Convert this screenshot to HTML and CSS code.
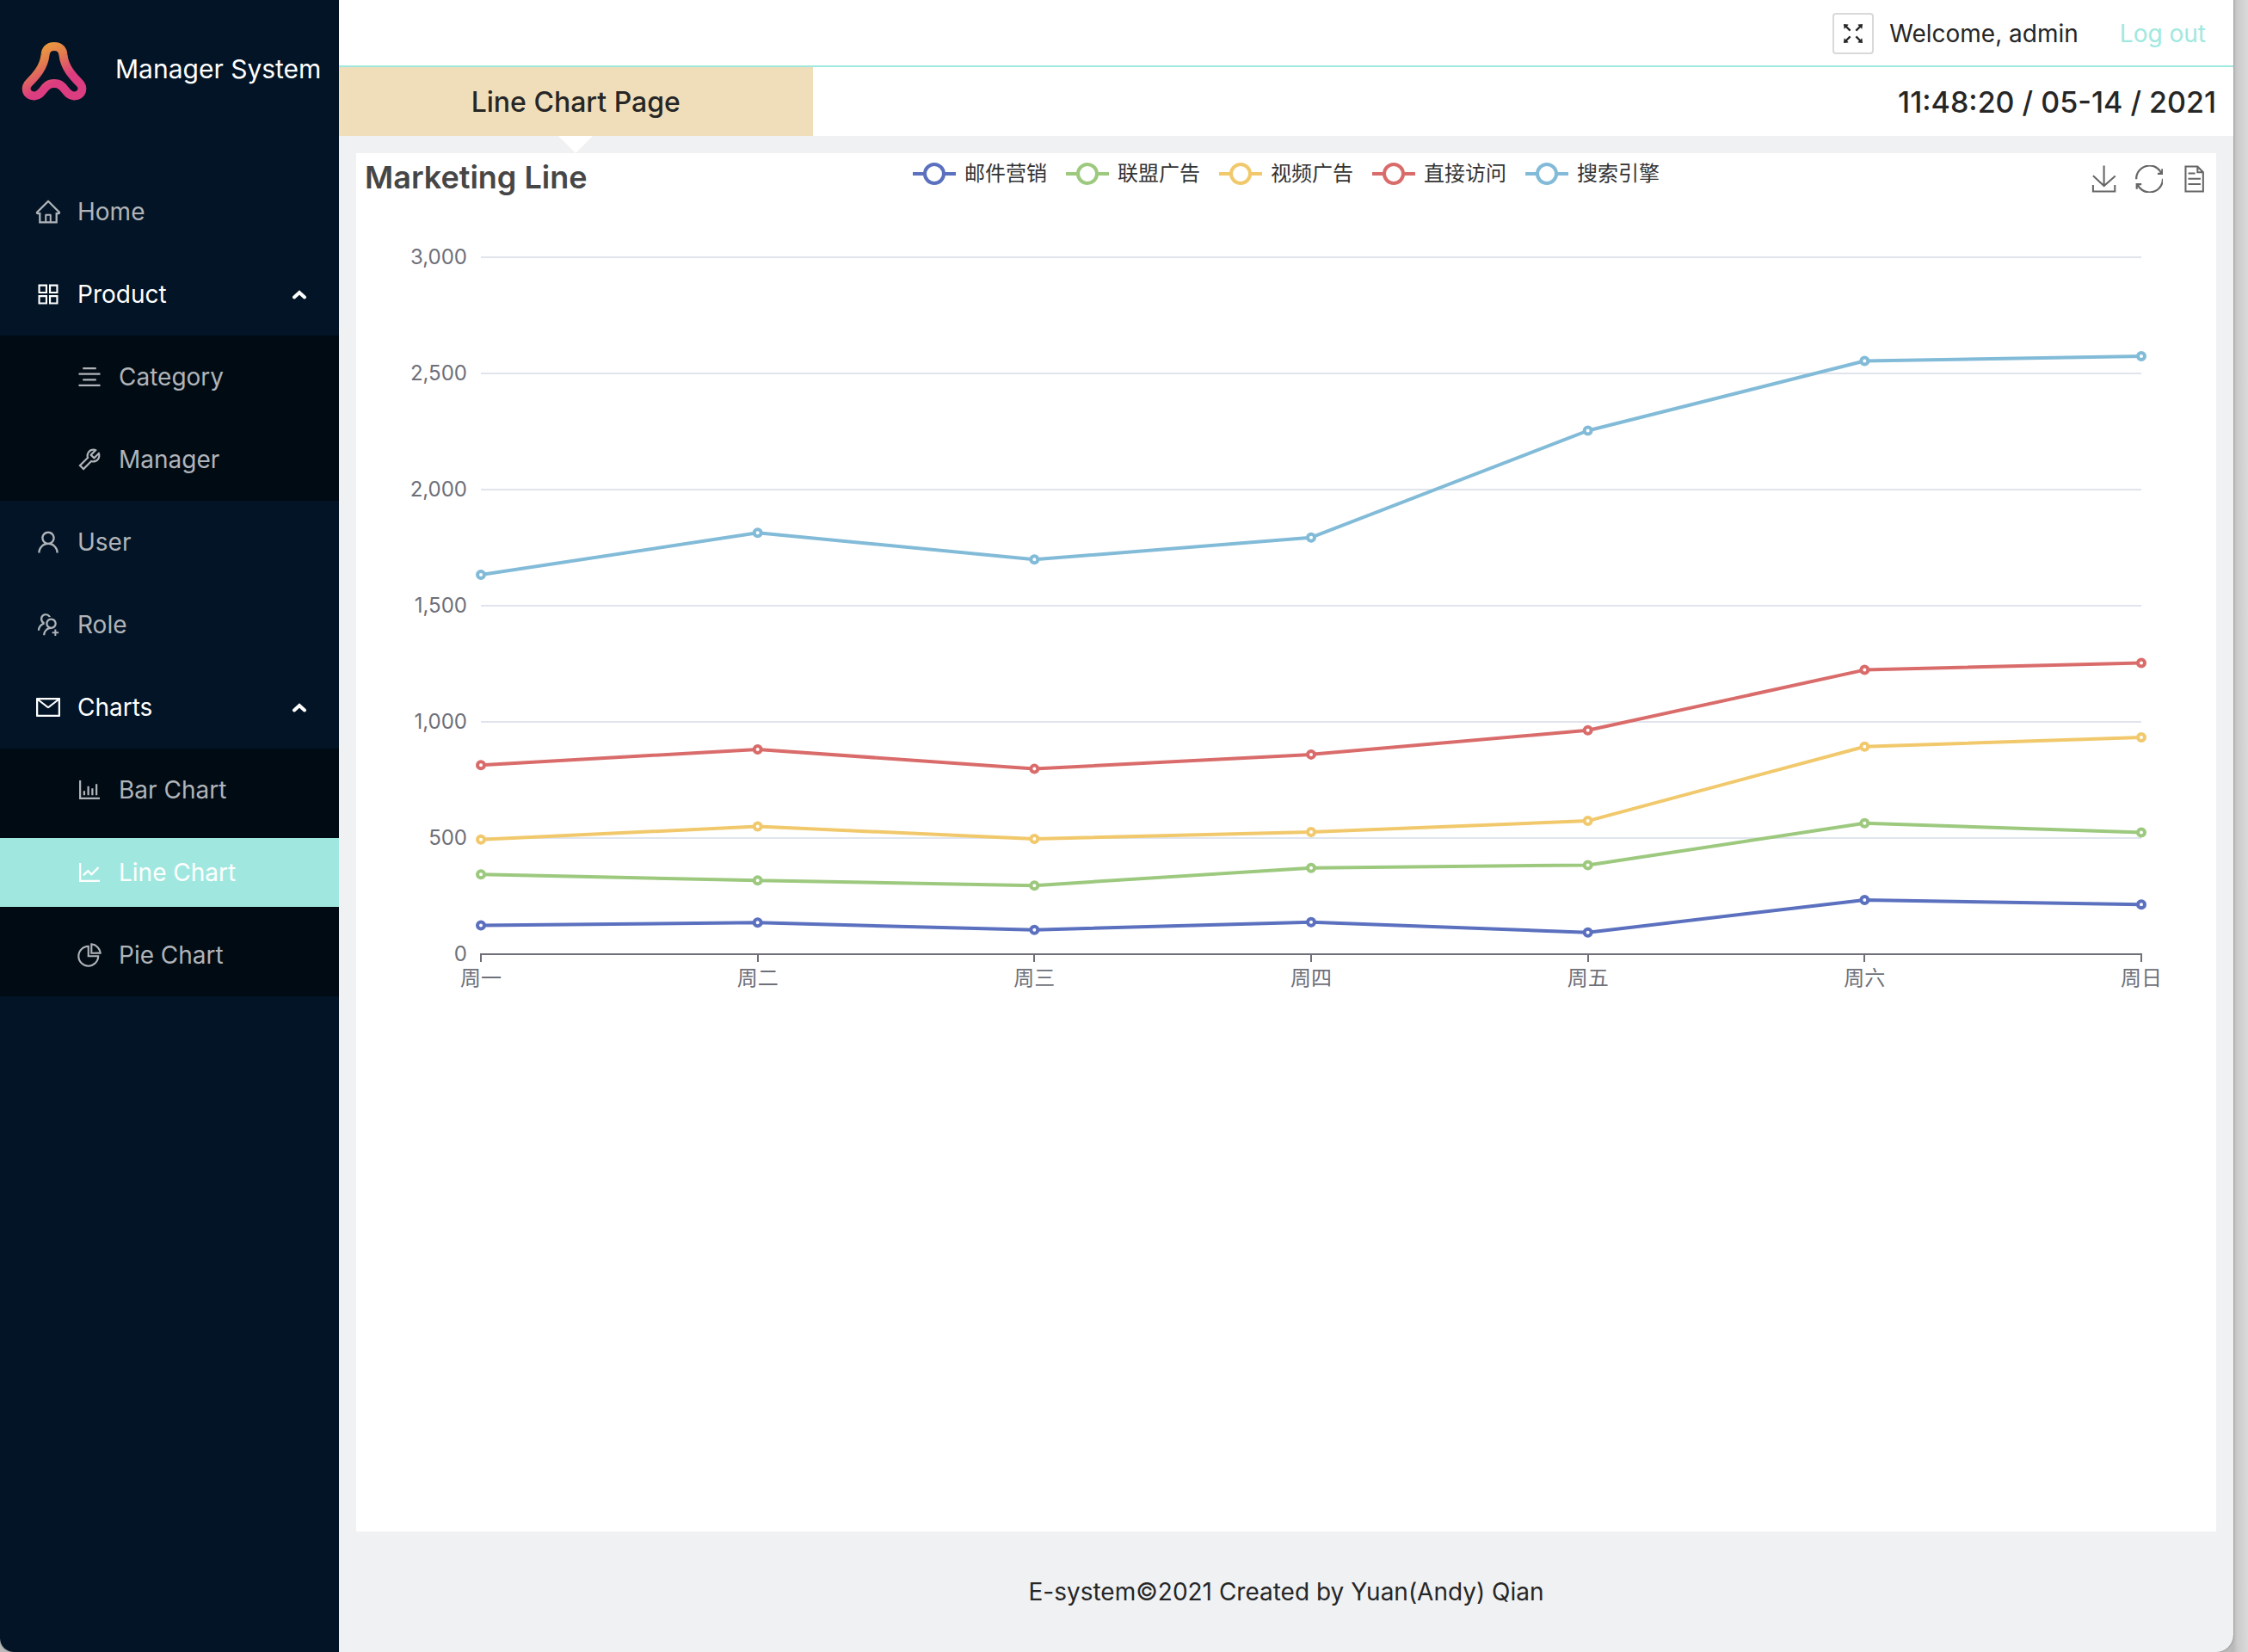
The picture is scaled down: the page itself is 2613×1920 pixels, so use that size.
FILE: index.html
```html
<!DOCTYPE html>
<html lang="en">
<head>
<meta charset="utf-8">
<title>Manager System</title>
<link rel="stylesheet" href="styles.css">
</head>
<body>
<div class="window">
  <aside class="sidebar">
    <div class="brand">
      <svg class="brand-logo" viewBox="0 0 80 80" aria-hidden="true">
        <defs>
          <linearGradient id="logo" gradientUnits="userSpaceOnUse" x1="26" y1="8" x2="56" y2="66">
            <stop offset="0" stop-color="#eda23a"/>
            <stop offset=".35" stop-color="#e37b4e"/>
            <stop offset=".75" stop-color="#dc3c80"/>
            <stop offset="1" stop-color="#dc3c80"/>
          </linearGradient>
        </defs>
        <path fill="none" stroke="url(#logo)" stroke-width="10" stroke-linejoin="round" d="M39 14C32 14 29 18 28.500 24C27 38 18 48 10 56C4 61 6 72 16 71.500C27 70.500 26 57 39 57C52 57 51 70.500 62 71.500C72 72 74 61 68 56C60 48 51 38 49.500 24C49 18 46 14 39 14Z"/>
      </svg>
      <span class="brand-name">Manager System</span>
    </div>
    <nav>
      <ul class="menu">
        <li><a class="item" href="#home">
          <svg class="icon" viewBox="0 0 1024 1024"><path d="M946.500 505L560.100 118.800l-25.900-25.900a31.500 31.500 0 0 0-44.400 0L77.500 505a63.900 63.900 0 0 0-18.800 46c.4 35.200 29.700 63.300 64.900 63.300h42.500V940h691.800V614.300h43.400c17.100 0 33.200-6.700 45.300-18.800a63.600 63.600 0 0 0 18.700-45.300c0-17-6.700-33.100-18.800-45.200zM568 868H456V664h112v204zm217.900-325.700V868H632V640c0-22.100-17.900-40-40-40H432c-22.100 0-40 17.900-40 40v228H238.100V542.300h-96l370-369.700 23.100 23.100L882 542.300h-96.100z"/></svg>
          Home</a></li>
        <li>
          <button class="item open" type="button" aria-expanded="true">
            <svg class="icon" viewBox="0 0 1024 1024"><path fill-rule="evenodd" d="M144 144h336v336H144zM212 212v200h200V212zM544 144h336v336H544zM612 212v200h200V212zM144 544h336v336H144zM212 612v200h200V612zM544 544h336v336H544zM612 612v200h200V612z"/></svg>
            Product
            <svg class="chevron" viewBox="0 0 20 12"><path d="M4 9.500L10 4L16 9.500"/></svg>
          </button>
          <ul class="submenu">
            <li><a class="item" href="#category">
              <svg class="icon" viewBox="0 0 1024 1024"><path d="M264 158h496v72H264zM112 364h800v72H112zM264 582h496v72H264zM112 794h800v72H112z"/></svg>
              Category</a></li>
            <li><a class="item" href="#manager">
              <svg class="icon" viewBox="0 0 1024 1024"><path d="M876.600 239.500c-.5-.9-1.200-1.800-2-2.500-5-5-13.100-5-18.100 0L684.200 409.300l-67.900-67.900L788.700 169c.8-.8 1.400-1.600 2-2.500 3.600-6.100 1.600-13.900-4.500-17.500-98.200-58-226.800-44.700-311.300 39.700-67 67-89.200 162-66.500 247.400l-293 293c-3 3-2.800 7.900.3 11l169.700 169.700c3.100 3.100 8.100 3.300 11 .3l292.900-292.900c85.500 22.800 180.500.7 247.600-66.400 84.400-84.500 97.700-213.100 39.700-311.300zM786 499.800c-58.100 58.100-145.300 69.300-214.600 33.600l-8.800 8.800-.1-.1-274 274.100-79.200-79.200 230.100-230.100s0 .1.100.1l52.800-52.800c-35.700-69.300-24.500-156.500 33.600-214.600a184.200 184.200 0 0 1 144-53.500L537 318.900a32.050 32.050 0 0 0 0 45.300l124.500 124.500a32.050 32.050 0 0 0 45.300 0l132.800-132.800c3.700 51.800-14.400 104.800-53.600 143.900z"/></svg>
              Manager</a></li>
          </ul>
        </li>
        <li><a class="item" href="#user">
          <svg class="icon" viewBox="0 0 1024 1024"><path d="M858.500 763.600a374 374 0 0 0-80.600-119.500 375.630 375.630 0 0 0-119.500-80.600c-.4-.2-.8-.3-1.200-.5C719.500 518 760 444.700 760 362c0-137-111-248-248-248S264 225 264 362c0 82.700 40.500 156 102.800 201.100-.4.2-.8.3-1.200.5-44.800 18.900-85 46-119.500 80.600a375.630 375.630 0 0 0-80.600 119.500A371.700 371.700 0 0 0 136 901.800a8 8 0 0 0 8 8.200h60c4.400 0 7.900-3.500 8-7.800 2-77.200 33-149.500 87.800-204.300 56.700-56.700 132-87.900 212.200-87.900s155.500 31.200 212.200 87.900C779 752.700 810 825 812 902.200c.1 4.400 3.600 7.800 8 7.800h60a8 8 0 0 0 8-8.200c-1-47.800-10.900-94.300-29.500-138.200zM512 534c-45.900 0-89.100-17.900-121.600-50.400S340 407.900 340 362c0-45.900 17.900-89.100 50.400-121.600S466.100 190 512 190s89.100 17.900 121.600 50.400S684 316.100 684 362c0 45.900-17.900 89.100-50.400 121.600S557.900 534 512 534z"/></svg>
          User</a></li>
        <li><a class="item" href="#role">
          <svg class="icon" viewBox="0 0 1024 1024"><path d="M892 772h-80v-80c0-4.400-3.600-8-8-8h-48c-4.400 0-8 3.600-8 8v80h-80c-4.400 0-8 3.600-8 8v48c0 4.400 3.600 8 8 8h80v80c0 4.400 3.600 8 8 8h48c4.400 0 8-3.600 8-8v-80h80c4.400 0 8-3.600 8-8v-48c0-4.400-3.600-8-8-8zM373.500 498.400c-.9-8.700-1.400-17.500-1.400-26.400 0-15.900 1.500-31.400 4.300-46.500.7-3.600-1.200-7.300-4.500-8.800-13.600-6.100-26.100-14.500-36.900-25.100a127.540 127.540 0 0 1-38.700-95.400c.9-32.100 13.800-62.600 36.300-85.600 24.700-25.300 57.900-39.100 93.200-38.700 31.900.3 62.700 12.600 86 34.400 7.900 7.400 14.700 15.600 20.400 24.400 2 3.100 5.900 4.400 9.300 3.200 17.600-6.100 36.200-10.400 55.300-12.400 5.600-.6 8.800-6.600 6.300-11.600-32.500-64.300-98.900-108.700-175.700-109.900-110.800-1.700-203.200 89.200-203.200 200 0 62.800 28.900 118.800 74.200 155.500-31.800 14.700-61.100 35-86.500 60.400-54.800 54.700-85.800 126.900-87.800 204a8 8 0 0 0 8 8.200h56.100c4.300 0 7.900-3.400 8-7.700 1.900-58 25.400-112.300 66.700-153.500 29.400-29.400 65.400-49.800 104.700-59.700 3.800-1 6.400-4.800 5.900-8.800zM824 472c0-109.400-87.900-198.300-196.900-200C516.300 270.300 424 361.200 424 472c0 62.800 29 118.800 74.200 155.500a300.950 300.950 0 0 0-86.400 60.400C357 742.600 326 814.800 324 891.800a8 8 0 0 0 8 8.200h56c4.300 0 7.900-3.400 8-7.700 1.900-58 25.400-112.300 66.700-153.500C505.800 695.700 563 672 624 672c110.400 0 200-89.500 200-200zm-109.500 90.500C690.300 586.700 658.200 600 624 600s-66.300-13.300-90.500-37.500a127.260 127.260 0 0 1-37.500-91.800c.3-32.800 13.400-64.500 36.300-88 24-24.600 56.100-38.300 90.400-38.700 33.900-.3 66.800 12.900 91 36.600 24.800 24.300 38.400 56.800 38.400 91.400-.1 34.200-13.400 66.300-37.600 90.500z"/></svg>
          Role</a></li>
        <li>
          <button class="item open" type="button" aria-expanded="true">
            <svg class="icon" viewBox="0 0 1024 1024"><path d="M928 160H96c-17.700 0-32 14.300-32 32v640c0 17.700 14.300 32 32 32h832c17.700 0 32-14.300 32-32V192c0-17.700-14.300-32-32-32zm-40 110.800V792H136V270.800l-27.600-21.500 39.300-50.500 42.800 33.300h643.100l42.800-33.300 39.300 50.500-27.700 21.500zM833.600 232L512 482 190.400 232l-42.800-33.300-39.300 50.500 27.600 21.500 341.600 265.600a55.990 55.990 0 0 0 68.700 0L888 270.800l27.600-21.500-39.300-50.500-42.700 33.200z"/></svg>
            Charts
            <svg class="chevron" viewBox="0 0 20 12"><path d="M4 9.500L10 4L16 9.500"/></svg>
          </button>
          <ul class="submenu">
            <li><a class="item" href="#bar">
              <svg class="icon" viewBox="0 0 1024 1024"><path d="M888 792H200V168c0-4.400-3.600-8-8-8h-56c-4.400 0-8 3.600-8 8v688c0 4.400 3.600 8 8 8h752c4.400 0 8-3.600 8-8v-56c0-4.400-3.600-8-8-8zm-600-80h56c4.400 0 8-3.600 8-8V560c0-4.400-3.600-8-8-8h-56c-4.400 0-8 3.600-8 8v144c0 4.400 3.600 8 8 8zm152 0h56c4.400 0 8-3.600 8-8V384c0-4.400-3.600-8-8-8h-56c-4.400 0-8 3.600-8 8v320c0 4.400 3.600 8 8 8zm152 0h56c4.400 0 8-3.600 8-8V462c0-4.400-3.600-8-8-8h-56c-4.400 0-8 3.600-8 8v242c0 4.400 3.600 8 8 8zm152 0h56c4.400 0 8-3.600 8-8V304c0-4.400-3.600-8-8-8h-56c-4.400 0-8 3.600-8 8v400c0 4.400 3.600 8 8 8z"/></svg>
              Bar Chart</a></li>
            <li><a class="item current" href="#line" aria-current="page">
              <svg class="icon" viewBox="0 0 1024 1024"><path d="M888 792H200V168c0-4.400-3.600-8-8-8h-56c-4.400 0-8 3.600-8 8v688c0 4.400 3.600 8 8 8h752c4.400 0 8-3.600 8-8v-56c0-4.400-3.600-8-8-8zM305.800 637.700c3.100 3.100 8.100 3.100 11.300 0l138.300-137.600L583 628.500c3.100 3.100 8.200 3.100 11.300 0l275.400-275.300c3.100-3.100 3.100-8.200 0-11.300l-39.600-39.600a8.030 8.030 0 0 0-11.300 0l-230 229.900L461.400 404a8.030 8.030 0 0 0-11.300 0L266.300 586.700a8.030 8.030 0 0 0 0 11.300l39.500 39.700z"/></svg>
              Line Chart</a></li>
            <li><a class="item" href="#pie">
              <svg class="icon" viewBox="0 0 1024 1024"><path d="M864 518H506V160c0-4.400-3.600-8-8-8h-26a398.460 398.460 0 0 0-282.800 117.100 398.190 398.190 0 0 0-85.700 127.100A397.610 397.610 0 0 0 72 552a398.460 398.460 0 0 0 117.100 282.800c36.700 36.700 79.500 65.600 127.100 85.700A397.610 397.610 0 0 0 472 952a398.460 398.460 0 0 0 282.800-117.100c36.700-36.700 65.600-79.500 85.700-127.100A397.610 397.610 0 0 0 872 552v-26c0-4.400-3.600-8-8-8zM705.700 787.800A331.590 331.590 0 0 1 470.400 884c-88.100-.4-170.900-34.900-233.200-97.200C174.500 724.100 140 640.700 140 552c0-88.700 34.500-172.100 97.200-234.800 54.600-54.600 124.900-87.900 200.800-95.500V586h364.300c-7.700 76.300-41.300 147-96.600 201.800zM952 462.400l-2.600-28.200c-8.500-92.100-49.400-179-115.200-244.600A399.400 399.400 0 0 0 589 74.600L560.700 72c-4.700-.4-8.700 3.200-8.700 7.900V464c0 4.400 3.600 8 8 8l384-1c4.700 0 8.400-4 8-8.600zm-332.200-58.200V147.600a332.240 332.240 0 0 1 166.400 89.800c45.700 45.600 77 103.600 90 166.100l-256.400.7z"/></svg>
              Pie Chart</a></li>
          </ul>
        </li>
      </ul>
    </nav>
  </aside>

  <div class="page">
    <header class="topbar">
      <button class="fullscreen" type="button" aria-label="Full screen">
        <svg class="icon" viewBox="0 0 1024 1024"><path d="M290 236.400l43.900-43.900a8.010 8.010 0 0 0-4.700-13.600L169 160c-5.100-.6-9.500 3.700-8.900 8.900L179 329.100c.8 6.600 8.900 9.400 13.600 4.700l43.700-43.700L370 423.700c3.100 3.100 8.200 3.100 11.300 0l42.400-42.300c3.100-3.100 3.100-8.200 0-11.300L290 236.400zm352.700 187.300c3.100 3.100 8.200 3.100 11.300 0l133.700-133.600 43.700 43.700a8.010 8.010 0 0 0 13.600-4.700L863.900 169c.6-5.100-3.700-9.500-8.900-8.900L694.800 179c-6.600.8-9.400 8.900-4.700 13.600l43.900 43.900L600.300 370a8.030 8.030 0 0 0 0 11.300l42.400 42.400zM845 694.900c-.8-6.600-8.900-9.400-13.600-4.700l-43.700 43.700L654 600.300a8.030 8.030 0 0 0-11.300 0l-42.400 42.300a8.030 8.030 0 0 0 0 11.300L734 787.600l-43.900 43.900a8.010 8.010 0 0 0 4.700 13.600L855 864c5.100.6 9.500-3.700 8.900-8.900L845 694.900zm-463.700-94.600a8.030 8.030 0 0 0-11.300 0L236.300 733.900l-43.700-43.700a8.010 8.010 0 0 0-13.600 4.700L160.100 855c-.6 5.100 3.700 9.500 8.900 8.900L329.200 845c6.600-.8 9.400-8.900 4.700-13.600L290 787.600 423.700 654c3.100-3.100 3.100-8.200 0-11.300l-42.400-42.400z"/></svg>
      </button>
      <span class="welcome">Welcome, admin</span>
      <a class="logout" href="#logout">Log out</a>
    </header>
    <div class="titlebar">
      <h1 class="page-title">Line Chart Page</h1>
      <time class="clock" datetime="2021-05-14T11:48:20">11:48:20 / 05-14 / 2021</time>
    </div>
    <main class="content">
      <section class="card">
        <div class="chart-head">
          <h2 class="chart-title">Marketing Line</h2>
          <ul class="legend" id="legend"></ul>
          <div class="tools">
            <button type="button" aria-label="Save as image"><svg viewBox="-1 -1 62 62"><path d="M4.700 22.900L29.300 45.500L54.700 23.400M4.600 43.600L4.600 58L53.800 58L53.800 43.600M29.200 45.100L29.200 0"/></svg></button>
            <button type="button" aria-label="Restore"><svg viewBox="0 1 58 58"><path d="M47 18.900h9.800V8.700M56.300 20.100C52.100 9 40.500.6 26.800 2.100C12.600 3.700 1.600 16.200 2.100 30.600M13 41.100H3.100v10.200M3.700 39.900c4.200 11.100 15.800 19.500 29.500 18c14.200-1.600 25.200-14.100 24.700-28.500"/></svg></button>
            <button type="button" aria-label="Data view"><svg viewBox="-1 -1 62 62"><path d="M17.500 17.300H33M45.400 29.500h-28M11.500 2v56H51V14.800L38.400 2H11.500zM38.400 2.200v12.700H51M45.400 41.700h-28"/></svg></button>
          </div>
        </div>
        <svg class="chart" id="chart" role="img" aria-label="Marketing Line"></svg>
      </section>
    </main>
    <footer class="footer">E-system©2021 Created by Yuan(Andy) Qian</footer>
  </div>
</div>
<script src="chart.js"></script>
</body>
</html>
```
FILE: styles.css
```css
* { box-sizing: border-box; }

body {
  margin: 0;
  background: linear-gradient(to left, #dadada, #cccccc 12px, #bababa 17px) #cccccc;
  font-family: Inter, "Noto Sans CJK SC", sans-serif;
  font-size: 28px;
  line-height: 44px;
  color: #262626;
}

ul { list-style: none; margin: 0; padding: 0; }
a { color: inherit; text-decoration: none; }
h1, h2 { margin: 0; }
button { font: inherit; color: inherit; background: none; border: 0; padding: 0; cursor: pointer; }

.window {
  display: flex;
  min-height: 100vh;
  margin-right: 17px;
  background: #f0f1f3;
  border-radius: 0 0 20px 16px;
  overflow: hidden;
  box-shadow: 0 0 2px #666666;
}

/* Sidebar */
.sidebar {
  flex: none;
  width: 394px;
  background: #021425;
  color: #b0b4b9;
}
.brand {
  display: flex;
  align-items: center;
  gap: 30px;
  height: 160px;
  padding-left: 24px;
  color: #ffffff;
}
.brand-logo { flex: none; width: 80px; height: 80px; }
.brand-name { font-size: 30px; white-space: nowrap; }
.menu { padding-top: 38px; }
.item {
  display: flex;
  align-items: center;
  gap: 18px;
  width: 100%;
  height: 80px;
  margin: 8px 0;
  padding: 0 36px 0 40px;
  text-align: left;
}
.menu li { display: flow-root; }
.open { color: #ffffff; }
.icon { flex: none; width: 32px; height: 32px; fill: currentColor; }
.chevron {
  width: 20px;
  height: 12px;
  margin-left: auto;
  fill: none;
  stroke: currentColor;
  stroke-width: 4;
  stroke-linecap: round;
}
.submenu { background: #000b14; }
.submenu .item { padding-left: 88px; }
.submenu .current { background: #a0e8df; color: #ffffff; }

/* Header */
.page { flex: 1; min-width: 0; display: flex; flex-direction: column; }
.topbar {
  display: flex;
  align-items: center;
  justify-content: flex-end;
  height: 78px;
  padding: 2px 32px 0 0;
  background: #ffffff;
  border-bottom: 2px solid #a0e8df;
}
.fullscreen {
  display: grid;
  place-items: center;
  width: 48px;
  height: 48px;
  margin-right: 18px;
  border: 2px solid #d9d9d9;
  border-radius: 4px;
}
.logout { margin-left: 48px; color: #a0e8df; }
.titlebar {
  display: flex;
  justify-content: space-between;
  height: 80px;
  line-height: 78px;
  background: #ffffff;
}
.page-title {
  position: relative;
  width: 25%;
  padding-top: 2px;
  background: #f0deba;
  font-size: 32px;
  font-weight: 500;
  text-align: center;
}
.page-title::after {
  content: "";
  position: absolute;
  top: 100%;
  left: calc(50% - 20px);
  border: 20px solid transparent;
  border-top-color: #ffffff;
  border-bottom: 0;
}
.clock { padding: 2px 20px 0 0; font-size: 34px; font-weight: 500; }

/* Chart card */
.content { flex: 1; display: flex; padding: 20px 20px 0; }
.card { flex: 1; min-width: 0; background: #ffffff; }
.chart-head {
  display: grid;
  grid-template-columns: 1fr auto 1fr;
  height: 60px;
  padding: 0 10px;
}
.chart-title { font-size: 36px; font-weight: 600; line-height: 56px; color: #464646; }
.legend { display: flex; gap: 22px; height: 48px; color: #333333; font-size: 24px; }
.legend li { display: flex; align-items: center; gap: 10px; }
.legend svg { width: 50px; height: 28px; fill: #ffffff; stroke-width: 4; }
.tools { display: flex; justify-content: flex-end; gap: 20px; padding-top: 14px; }
.tools button { width: 32px; height: 32px; }
.tools svg { display: block; width: 32px; height: 32px; fill: none; stroke: #666666; stroke-width: 4; }

.chart { display: block; width: 100%; height: 920px; font-size: 24px; }
.chart text { fill: #6e7079; dominant-baseline: central; }
.chart .value { text-anchor: end; }
.chart .day { text-anchor: middle; }
.chart .rule { stroke: #e0e4ec; stroke-width: 2; }
.chart .axis { fill: none; stroke: #6e7079; stroke-width: 2; }
.chart .series { fill: none; stroke-width: 4; stroke-linejoin: bevel; }
.chart .point { fill: #ffffff; stroke-width: 4; }

.footer { padding: 48px 100px; text-align: center; }
```
FILE: chart.js
```js
const days = ["周一", "周二", "周三", "周四", "周五", "周六", "周日"];
const series = [
  { name: "邮件营销", color: "#5b70be", data: [120, 132, 101, 134, 90, 230, 210] },
  { name: "联盟广告", color: "#9dc97f", data: [220, 182, 191, 234, 290, 330, 310] },
  { name: "视频广告", color: "#f1c96c", data: [150, 232, 201, 154, 190, 330, 410] },
  { name: "直接访问", color: "#d96c6b", data: [320, 332, 301, 334, 390, 330, 320] },
  { name: "搜索引擎", color: "#82bbd8", data: [820, 932, 901, 934, 1290, 1330, 1320] }
];

document.getElementById("legend").innerHTML = series.map(s =>
  `<li><svg viewBox="0 0 50 28" stroke="${s.color}"><path d="M0 14H50"/><circle cx="25" cy="14" r="11"/></svg>${s.name}</li>`
).join("");

const chart = document.getElementById("chart");

function draw() {
  const left = 145, right = 87, top = 60, bottom = 870;
  const width = chart.clientWidth - left - right;
  const x = i => left + width * i / (days.length - 1);
  const y = v => bottom - (bottom - top) * v / 3000;
  let out = "";

  for (let v = 0; v <= 3000; v += 500) {
    const line = y(v) + 1;
    if (v) out += `<path class="rule" d="M${left} ${line}H${left + width}"/>`;
    out += `<text class="value" x="${left - 16}" y="${y(v)}">${v.toLocaleString("en-US")}</text>`;
  }

  out += `<path class="axis" d="M${left - 1} ${bottom + 1}H${left + width + 1}"/>`;
  days.forEach((d, i) => {
    const tick = Math.round(x(i));
    out += `<path class="axis" d="M${tick} ${bottom}v10"/>`;
    out += `<text class="day" x="${x(i)}" y="${bottom + 28}">${d}</text>`;
  });

  /* Each series is stacked on the ones before it. */
  const total = days.map(() => 0);
  series.forEach(s => {
    const points = s.data.map((v, i) => [x(i), y(total[i] += v)]);
    out += `<polyline class="series" stroke="${s.color}" points="${points.join(" ")}"/>`;
    points.forEach(p => {
      out += `<circle class="point" stroke="${s.color}" cx="${p[0]}" cy="${p[1]}" r="4"/>`;
    });
  });
  chart.innerHTML = out;
}

draw();
window.addEventListener("resize", draw);
```
